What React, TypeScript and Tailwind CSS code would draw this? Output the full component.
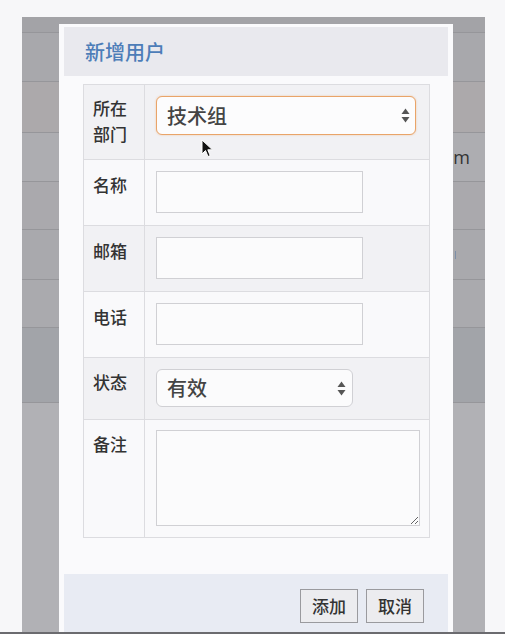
import { useState } from 'react';

const cjk = { fontFamily: '"Noto Sans CJK SC", "Noto Sans", sans-serif' };

// Hai tam giác lên/xuống của ô chọn
const Arrows = () => (
  <svg width="9" height="15" viewBox="0 0 9 15" className="pointer-events-none">
    <path d="M0.5 6 L4.5 0.5 L8.5 6 Z" fill="#555" />
    <path d="M0.5 9 L8.5 9 L4.5 14.5 Z" fill="#555" />
  </svg>
);

const Cursor = () => (
  <svg width="13" height="19" viewBox="0 0 13 19" className="absolute left-[179px] top-[122px]">
    <path d="M1 1 L1 15 L4.5 11.5 L7 17.5 L9.2 16.6 L6.8 10.8 L11.5 10.8 Z" fill="#111" stroke="#fff" strokeWidth="1" />
  </svg>
);

const backdropRows = [
  { h: 'h-[16px]', bg: 'bg-[#a3a3a7]' },
  { h: 'h-[49px]', bg: 'bg-[#a8a8ac]' },
  { h: 'h-[51px]', bg: 'bg-[#aca9ab]' },
  { h: 'h-[49px]', bg: 'bg-[#adadb1]' },
  { h: 'h-[48px]', bg: 'bg-[#aaa9ad]' },
  { h: 'h-[50px]', bg: 'bg-[#a9a9ad]' },
  { h: 'h-[48px]', bg: 'bg-[#aaaaae]' },
  { h: 'h-[75px]', bg: 'bg-[#a2a4a9]' },
];

const App = () => {
  const [dept, setDept] = useState('技术组');
  const [status, setStatus] = useState('有效');

  return (
    <div className="h-[634px] w-[505px] flex flex-col bg-[#f7f7f9] overflow-hidden" style={cjk}>
      <div className="flex-1 pt-[17px] pl-[22px] flex">
        {/* lớp nền tối phía sau hộp thoại */}
        <div className="relative w-[463px] h-full flex flex-col bg-[#b1b1b5]">
          {backdropRows.map((r, i) => (
            <div key={i} className={`${r.h} ${r.bg} border-b border-[#96969a] flex items-center justify-end pr-[15px]`}>
              {i === 3 && (
                <span className="text-[18px] text-[#333] leading-none" style={{ fontFamily: '"Open Sans", sans-serif' }}>
                  m
                </span>
              )}
              {i === 5 && <span className="w-[1px] h-[8px] bg-[#7d8fa8] mr-[14px]" />}
            </div>
          ))}

          {/* hộp thoại */}
          <div className="absolute left-[37px] top-[7px] bottom-0 w-[394px] bg-[#fafafc] pt-[3px] px-[5px] flex flex-col font-medium">
            <div className="h-[49px] bg-[#e9e9ee] flex items-center pl-[21px]">
              <h2 className="text-[20px] text-[#4d7db8] leading-none font-medium">新增用户</h2>
            </div>

            <div className="pt-[8px] pl-[19px] pr-[18px]">
              <div className="border border-[#dcdce0] text-[17px] text-[#333]">
                <div className="h-[74px] grid grid-cols-[61px_1fr] bg-[#f1f1f4]">
                  <div className="border-r border-[#dcdce0] pl-[9px] pt-[10px] leading-[26px]">
                    所在
                    <br />
                    部门
                  </div>
                  <div className="pl-[11px] pt-[11px] pr-[13px]">
                    <div className="relative">
                      <select
                        value={dept}
                        onChange={(e) => setDept(e.target.value)}
                        className="appearance-none w-full h-[39px] rounded-[6px] border-[1.5px] border-[#e9a469] bg-[#fcfcfd] pl-[10px] text-[20px] text-[#444] font-medium outline-none shadow-[0_0_2px_rgba(233,164,105,0.6)]"
                      >
                        <option>技术组</option>
                        <option>市场组</option>
                      </select>
                      <div className="absolute right-[6px] top-[12px] pointer-events-none">
                        <Arrows />
                      </div>
                    </div>
                  </div>
                </div>

                <div className="h-[66px] grid grid-cols-[61px_1fr] border-t border-[#dcdce0] bg-[#f9f9fb]">
                  <div className="border-r border-[#dcdce0] pl-[9px] pt-[12px] leading-[26px]">名称</div>
                  <div className="pl-[11px] pt-[11px]">
                    <input className="w-[207px] h-[42px] border border-[#d0d0d4] bg-[#fbfbfc] outline-none" />
                  </div>
                </div>

                <div className="h-[66px] grid grid-cols-[61px_1fr] border-t border-[#dcdce0] bg-[#f1f1f4]">
                  <div className="border-r border-[#dcdce0] pl-[9px] pt-[12px] leading-[26px]">邮箱</div>
                  <div className="pl-[11px] pt-[11px]">
                    <input className="w-[207px] h-[42px] border border-[#d0d0d4] bg-[#fbfbfc] outline-none" />
                  </div>
                </div>

                <div className="h-[66px] grid grid-cols-[61px_1fr] border-t border-[#dcdce0] bg-[#f9f9fb]">
                  <div className="border-r border-[#dcdce0] pl-[9px] pt-[12px] leading-[26px]">电话</div>
                  <div className="pl-[11px] pt-[11px]">
                    <input className="w-[207px] h-[42px] border border-[#d0d0d4] bg-[#fbfbfc] outline-none" />
                  </div>
                </div>

                <div className="h-[62px] grid grid-cols-[61px_1fr] border-t border-[#dcdce0] bg-[#f1f1f4]">
                  <div className="border-r border-[#dcdce0] pl-[9px] pt-[11px] leading-[26px]">状态</div>
                  <div className="pl-[11px] pt-[11px]">
                    <div className="relative w-[197px]">
                      <select
                        value={status}
                        onChange={(e) => setStatus(e.target.value)}
                        className="appearance-none w-full h-[38px] rounded-[6px] border border-[#d0d0d4] bg-[#fbfbfc] pl-[10px] text-[20px] text-[#444] font-medium outline-none"
                      >
                        <option>有效</option>
                        <option>无效</option>
                      </select>
                      <div className="absolute right-[7px] top-[12px] pointer-events-none">
                        <Arrows />
                      </div>
                    </div>
                  </div>
                </div>

                <div className="h-[118px] grid grid-cols-[61px_1fr] border-t border-[#dcdce0] bg-[#f9f9fb]">
                  <div className="border-r border-[#dcdce0] pl-[9px] pt-[11px] leading-[26px]">备注</div>
                  <div className="pl-[11px] pt-[10px] pr-[11px]">
                    <textarea className="block w-[264px] h-[96px] border border-[#d0d0d4] bg-[#fbfbfc] outline-none" />
                  </div>
                </div>
              </div>
            </div>

            <div className="mt-[36px] flex-1 bg-[#e8ebf3] flex justify-end items-start pt-[15px] pr-[24px] gap-[8px]">
              <button className="w-[58px] h-[34px] border border-[#9a9a9e] bg-[#ececef] text-[17px] text-[#333] font-medium">添加</button>
              <button className="w-[58px] h-[34px] border border-[#9a9a9e] bg-[#ececef] text-[17px] text-[#333] font-medium">取消</button>
            </div>
          </div>

          <Cursor />
        </div>
      </div>
      <div className="h-[2px] bg-[#6b6b6f]" />
    </div>
  );
};

export default App;
